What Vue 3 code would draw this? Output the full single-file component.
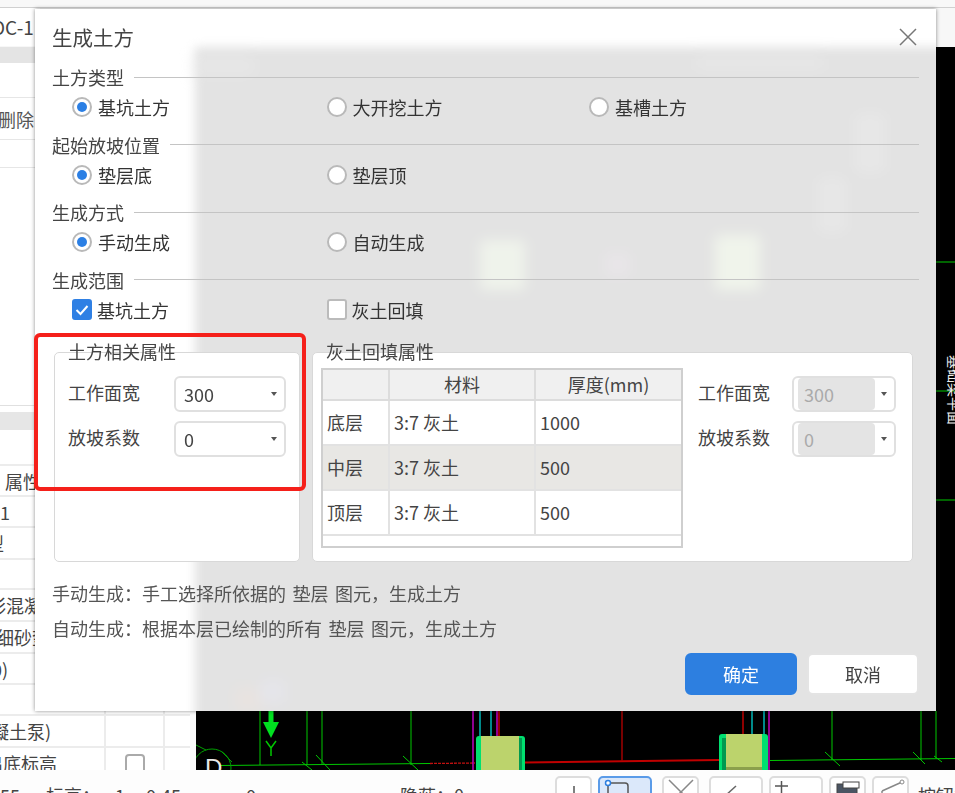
<script setup>
const sections = [
  { title: '土方类型', options: [{ t: '基坑土方', on: true }, { t: '大开挖土方' }, { t: '基槽土方' }] },
  { title: '起始放坡位置', options: [{ t: '垫层底', on: true }, { t: '垫层顶' }] },
  { title: '生成方式', options: [{ t: '手动生成', on: true }, { t: '自动生成' }] },
]
const rows = [
  { name: '底层', mat: '3:7 灰土', h: '1000' },
  { name: '中层', mat: '3:7 灰土', h: '500', alt: true },
  { name: '顶层', mat: '3:7 灰土', h: '500' },
]
const blobs = [
  { l: 285, t: 193, w: 45, h: 50, c: '#eff3eb' },
  { l: 520, t: 188, w: 45, h: 55, c: '#f0f4eb' },
  { l: 660, t: 66, w: 30, h: 60, c: '#e7e7e7' },
  { l: 623, t: 130, w: 28, h: 56, c: '#e7e7e7' },
  { l: 410, t: 205, w: 25, h: 25, c: '#e8e5e8' },
  { l: 40, t: 640, w: 30, h: 25, c: '#e8e3e0' },
  { l: 65, t: 632, w: 25, h: 25, c: '#e5e5ea' },
  { l: 0, t: 8, w: 60, h: 22, c: '#e6e6e6' },
  { l: 500, t: 8, w: 130, h: 16, c: '#e6e6e6' },
]
const leftRows = [
  { h: 36, a: '', x: 0 },
  { h: 31, a: '属性', x: 5 },
  { h: 31, a: '1', x: 0 },
  { h: 32, a: '型', x: -14 },
  { h: 30, a: '', x: 0 },
  { h: 32, a: '彩混凝', x: -12 },
  { h: 32, a: '细砂垫', x: -4 },
  { h: 31, a: '0)', x: -8 },
  { h: 31, a: '', x: 0 },
  { h: 32, a: '凝土泵)', x: -9 },
  { h: 32, a: '出底标高', x: -15, check: true },
]
const statusItems = [
  { t: '55', w: 46 }, { t: '标高：', w: 69 }, { t: '1', w: 31 }, { t: '0.45', w: 100 },
  { t: '0', w: 154 }, { t: '隐蔽：0', w: 155 },
]
</script>

<template>
  <div class="app">
    <div class="topline"></div>
    <div class="tabbar"><span class="tabtext">OC-1</span></div>
    <div class="main">
      <aside class="left">
        <div class="lhead"></div>
        <div class="lrow r35"></div>
        <div class="lrow r42"><span class="del">删除</span></div>
        <div class="lrow r28"></div>
        <div class="lgap"></div>
        <div class="lhead2"></div>
        <div class="lrow2" v-for="(r, i) in leftRows" :key="i" :style="{ height: r.h + 'px' }">
          <span class="c1"><span :style="{ marginLeft: r.x + 'px' }">{{ r.a }}</span></span>
          <span class="c2"><i v-if="r.check" class="lcheck"></i></span>
        </div>
      </aside>
      <div class="canvas">
        <svg class="cad" viewBox="196 47 759 723" width="759" height="723">
          <g stroke="#00c800" stroke-width="1" fill="none">
            <path d="M936 262H955M936 391H955M936 500H955" />
            <path d="M260 711V765M307 711V765M322 711V765M411 711V765" />
            <path d="M220 765.5L430 763.5" />
            <path d="M770 760.5L955 758.5M832 711V760M921 711V760M936 711V758" />
            <path d="M302 762L312 770M316 755L330 770M403 756L418 770M825 752L840 766M913 752L925 764M934 756L942 762" />
            <circle cx="212" cy="768" r="19" stroke="#00a000" />
            <path d="M196 745L206 750M222 752L232 762" stroke="#00a000" />
            <path d="M266 741L271 748L276 741M271 748V756" stroke-width="1.500" />
          </g>
          <path d="M268.500 711H273.500V722H279L271 738L263 722H268.500Z" fill="#00e020" />
          <text x="205" y="776" class="axis">D</text>
          <path d="M430 763.500L475 763" stroke="#c01010" stroke-width="1.300" stroke-dasharray="3 1" />
          <path d="M525 762.500L719 760" stroke="#c00000" stroke-width="2" />
          <path d="M622 711V761" stroke="#a00000" stroke-width="1.500" />
          <g fill="none" stroke-width="1.500">
            <path d="M480 711V736M491 711V736M752 711V734M764 711V734" stroke="#00b8b8" />
            <path d="M497 711V736M473 711V770M769 711V770" stroke="#c000c0" />
            <path d="M499 711V736M743 711V734" stroke="#c00000" />
            <path d="M478 745V770" stroke="#00b8b8" />
          </g>
          <g>
            <rect x="476" y="736" width="49" height="36" rx="3" fill="#00e070" />
            <rect x="481" y="736" width="38" height="36" fill="#bcd36c" />
            <rect x="519" y="738" width="3" height="34" fill="#009a50" />
            <rect x="719" y="734" width="49" height="38" rx="3" fill="#00e070" />
            <rect x="722" y="738" width="4" height="34" fill="#009a50" />
            <rect x="726" y="734" width="36" height="34" fill="#bcd36c" />
            <rect x="726" y="767" width="36" height="5" fill="#8ba04c" />
          </g>
          <text class="vtext" transform="translate(949 355) rotate(90)">基础梁平面</text>
        </svg>
      </div>
    </div>
    <div class="status">
      <span v-for="s in statusItems" :key="s.t" class="sitem" :style="{ width: s.w + 'px' }">{{ s.t }}</span>
      <div class="tools">
        <span class="tool w37"><svg width="35" height="20"><path d="M17 8V20M17 18H26" stroke="#555" stroke-width="1.500" fill="none" /></svg></span>
        <span class="tool w54 sel"><svg width="52" height="20"><rect x="8" y="5" width="20" height="20" rx="3" stroke="#555" stroke-width="1.500" fill="none" /><circle cx="8" cy="5" r="2.500" fill="#fff" stroke="#2d7fe0" stroke-width="1.500" /><path d="M40 15L43 18L46 15" fill="#777" /></svg></span>
        <span class="tool w37 m8"><svg width="35" height="20"><path d="M5 2L17 14L29 2M17 14L8 22M17 14L26 22" stroke="#888" stroke-width="1.500" fill="none" /></svg></span>
        <span class="tool w54 m8"><svg width="52" height="20"><path d="M14 18L25 8" stroke="#666" stroke-width="1.500" /><path d="M41 15L44 18L47 15" fill="#777" /></svg></span>
        <span class="tool w54"><svg width="52" height="20"><path d="M4 8H17M10.500 3V16" stroke="#555" stroke-width="1.500" /><path d="M40 15L43 18L46 15" fill="#777" /></svg></span>
        <span class="tool w37"><svg width="35" height="20"><rect x="6" y="6" width="20" height="18" fill="#4b5563" stroke="#444" /><rect x="12" y="4" width="16" height="6" fill="#fff" stroke="#444" /></svg></span>
        <span class="tool w37"><svg width="35" height="20"><path d="M8 13L28 4" stroke="#888" stroke-width="1.500" /><circle cx="28" cy="4" r="2" fill="#fff" stroke="#888" /><path d="M8 13V22" stroke="#888" stroke-width="1.500" /></svg></span>
        <span class="toolnote">按钮栏</span>
      </div>
    </div>

    <section class="dialog">
      <div class="backdrop">
        <i v-for="(b, i) in blobs" :key="i" class="blob" :style="{ left: b.l + 'px', top: b.t + 'px', width: b.w + 'px', height: b.h + 'px', background: b.c }"></i>
      </div>
      <div class="content">
        <header class="dhead">
          <h1>生成土方</h1>
          <svg class="close" width="18" height="18" viewBox="0 0 18 18"><path d="M1 1L17 17M17 1L1 17" stroke="#777" stroke-width="1.500" /></svg>
        </header>

        <div v-for="s in sections" :key="s.title" class="sec">
          <div class="legend"><span>{{ s.title }}</span><i></i></div>
          <div class="opts">
            <label v-for="o in s.options" :key="o.t" class="opt">
              <span class="radio" :class="{ on: o.on }"></span>{{ o.t }}
            </label>
          </div>
        </div>
        <div class="sec">
          <div class="legend"><span>生成范围</span><i></i></div>
          <div class="opts">
            <label class="opt tight">
              <span class="check on"><svg width="16" height="16" viewBox="0 0 16 16"><path d="M2.500 8L6.500 12L13.500 4" stroke="#fff" stroke-width="2" fill="none" /></svg></span>基坑土方
            </label>
            <label class="opt tight"><span class="check"></span>灰土回填</label>
          </div>
        </div>

        <div class="panels">
          <div class="panel pleft">
            <span class="ptitle">土方相关属性</span>
            <div class="form">
              <span class="flabel">工作面宽</span>
              <div class="select"><span class="val">300</span><i class="caret"></i></div>
              <span class="flabel">放坡系数</span>
              <div class="select"><span class="val">0</span><i class="caret"></i></div>
            </div>
          </div>
          <div class="panel pright">
            <span class="ptitle">灰土回填属性</span>
            <div class="tablewrap">
              <table>
                <thead>
                  <tr><th></th><th>材料</th><th>厚度(mm)</th></tr>
                </thead>
                <tbody>
                  <tr v-for="r in rows" :key="r.name" :class="{ alt: r.alt }">
                    <td>{{ r.name }}</td><td>{{ r.mat }}</td><td>{{ r.h }}</td>
                  </tr>
                </tbody>
              </table>
            </div>
            <div class="form side">
              <span class="flabel">工作面宽</span>
              <div class="select off"><span class="val">300</span><i class="caret"></i></div>
              <span class="flabel">放坡系数</span>
              <div class="select off"><span class="val">0</span><i class="caret"></i></div>
            </div>
          </div>
        </div>

        <p class="help first">手动生成：手工选择所依据的 垫层 图元，生成土方</p>
        <p class="help">自动生成：根据本层已绘制的所有 垫层 图元，生成土方</p>

        <footer class="btns">
          <button class="btn primary">确定</button>
          <button class="btn">取消</button>
        </footer>
      </div>
    </section>

    <div class="redbox"></div>
  </div>
</template>

<style>
html, body { margin: 0; background: #fff; overflow: hidden; }
</style>

<style scoped>
.app {
  position: relative;
  width: 955px;
  height: 793px;
  overflow: hidden;
  background: #fff;
  font-family: "Noto Sans CJK SC", "Noto Sans", sans-serif;
  font-size: 18px;
  color: #333;
  display: flex;
  flex-direction: column;
  filter: blur(0.45px);
}
.topline { height: 8px; background: #f8f8f8; border-bottom: 1px solid #d0d0d0; box-sizing: border-box; flex: none; }
.tabbar { height: 39px; flex: none; background: #f7f7f7; display: flex; align-items: center; overflow: hidden; }
.tabtext { margin-left: -9px; font-size: 19px; color: #444; background: #fff; padding-right: 6px; line-height: 38px; margin-top: -1px; }
.main { flex: none; height: 723px; display: flex; }
.left { width: 196px; flex: none; overflow: hidden; background: #fafafa; }
.lhead { height: 16px; background: #e4e4e4; }
.lrow { box-sizing: border-box; border-bottom: 1px solid #e6e6e6; background: #fff; overflow: hidden; }
.r35 { height: 35px; }
.r42 { height: 42px; display: flex; align-items: center; }
.r28 { height: 28px; }
.del { margin-left: -2px; color: #555; white-space: nowrap; }
.lgap { height: 238px; background: #fff; border-bottom: 1px solid #e0e0e0; box-sizing: border-box; }
.lhead2 { height: 24px; border-top: 6px solid #fff; background: #e6e6e6; box-sizing: border-box; }
.lrow2 {
  box-sizing: border-box;
  width: 190px;
  display: grid;
  grid-template-columns: 104px 61px 25px;
  border-bottom: 2px solid #ececec;
  background: #fff;
  overflow: hidden;
  align-items: center;
  color: #444;
  white-space: nowrap;
}
.c1 { grid-column: 1; overflow: hidden; height: 100%; display: flex; align-items: center; }
.c2 { grid-column: 2; height: 100%; border-left: 2px solid #ececec; border-right: 2px solid #ececec; display: flex; justify-content: center; padding-top: 6px; box-sizing: border-box; }
.lcheck { display: block; width: 20px; height: 22px; border: 2px solid #aaa; border-radius: 4px; box-sizing: border-box; background: #fff; }
.canvas { flex: 1; background: #000; overflow: hidden; }
.cad { display: block; }
.axis { font-size: 24px; fill: #e8e8e8; font-family: "Liberation Sans", sans-serif; }
.vtext { font-size: 14px; fill: #eee; }
.status { flex: none; height: 23px; background: #fdfdfd; display: flex; overflow: hidden; position: relative; }
.sitem { flex: none; font-size: 18px; color: #444; line-height: 20px; padding-top: 15px; box-sizing: content-box; white-space: nowrap; }
.tools { display: flex; gap: 6px; padding-top: 6px; margin-left: 0; flex: none; }
.tool { display: block; flex: none; height: 30px; border: 2px solid #ddd; border-radius: 5px; box-sizing: border-box; overflow: hidden; background: #fff; }
.tool svg { display: block; }
.w37 { width: 37px; }
.w54 { width: 54px; }
.m8 { margin-left: 4px; }
.sel { background: #dbe8fa; border-color: #5a9be8; }
.toolnote { font-size: 18px; color: #444; margin-left: 3px; line-height: 20px; padding-top: 9px; white-space: nowrap; }

.dialog {
  position: absolute;
  left: 35px;
  top: 9px;
  width: 901px;
  height: 702px;
  background: #fff;
  box-shadow: 0 0 4px rgba(0, 0, 0, 0.45);
  overflow: hidden;
}
.backdrop {
  position: absolute;
  left: 160px;
  top: 38px;
  right: -30px;
  bottom: -30px;
  background: #e3e3e3;
  filter: blur(5px);
}
.blob { position: absolute; display: block; filter: blur(5px); }
.content { position: relative; padding: 0 17px; }
.dhead { height: 56px; display: flex; align-items: center; justify-content: space-between; }
h1 { margin: 0; font-size: 20.500px; font-weight: 400; color: #444; }
.close { margin-right: 2px; margin-top: 0; }
.sec { height: 60px; margin-bottom: 7.670px; }
.legend { height: 24px; display: flex; align-items: center; gap: 10px; color: #444; }
.legend i { flex: 1; display: block; height: 1px; background: #c4c4c4; margin-top: 0; }
.opts { height: 36px; display: grid; grid-template-columns: 254.500px 262.500px 1fr; padding-left: 20px; align-items: center; }
.opt { display: flex; align-items: center; gap: 6px; color: #333; }
.opt.tight { gap: 5px; }
.radio { display: block; width: 20px; height: 20px; border: 2px solid #b9b9b9; border-radius: 50%; background: #fff; box-sizing: border-box; position: relative; }
.radio.on::after { content: ""; position: absolute; left: 3px; top: 3px; width: 10px; height: 10px; border-radius: 50%; background: #2b7fe4; }
.check { display: flex; align-items: center; justify-content: center; width: 20px; height: 21px; border: 2px solid #bbb; border-radius: 3px; background: #fff; box-sizing: border-box; }
.check.on { background: #2f80e4; border-color: #2f80e4; }
.panels { display: flex; gap: 12px; margin: 24px 6px 0 2px; }
.panel { position: relative; height: 210px; box-sizing: border-box; background: #fff; border: 1px solid #d8d8d8; border-radius: 5px; }
.pleft { width: 247px; padding: 23px 13px 0 13px; }
.pright { width: 601px; padding: 15px 17px 0 8px; display: flex; gap: 15px; }
.ptitle { position: absolute; top: -12px; left: 13px; color: #444; line-height: 20px; }
.form { display: grid; grid-template-columns: 106px 112px; row-gap: 9px; align-items: center; color: #444; }
.form.side { grid-template-columns: 94px 104px; align-self: flex-start; padding-top: 8px; }
.flabel { line-height: 36px; margin-top: -2px; margin-bottom: 2px; white-space: nowrap; }
.select { position: relative; height: 36px; box-sizing: border-box; border: 2px solid #e0e0e0; border-radius: 6px; background: #fff; display: flex; align-items: center; padding-left: 8px; color: #444; }
.val { line-height: 24px; }
.caret { position: absolute; right: 7px; top: 14px; width: 0; height: 0; border-left: 3.500px solid transparent; border-right: 3.500px solid transparent; border-top: 4px solid #555; }
.select.off { padding-left: 0; }
.select.off .val { position: absolute; left: 4px; top: 0; bottom: 0; width: 77px; box-sizing: border-box; padding-left: 6px; line-height: 32px; background: #e4e4e4; color: #aaa; border-radius: 4px; }
.tablewrap { width: 362px; height: 180px; box-sizing: border-box; border: 2px solid #cfcfcf; background: #fff; flex: none; }
table { border-collapse: collapse; table-layout: fixed; width: 358px; }
th:nth-child(1), td:nth-child(1) { width: 66px; }
th:nth-child(2), td:nth-child(2) { width: 146px; }
th, td { border: 2px solid #e2e2e2; box-sizing: border-box; font-weight: 400; color: #444; padding: 0; }
th { height: 30px; background: #f0f0f0; text-align: center; border-color: #dcdcdc; line-height: 20px; }
td { height: 45px; padding-left: 4px; line-height: 24px; }
tr.alt td { background: #e8e7e4; }
th:first-child, td:first-child { border-left: 0; }
th:last-child, td:last-child { border-right: 0; }
thead th { border-top: 0; }
.help { margin: 0; height: 35px; line-height: 35px; color: #555; white-space: nowrap; word-spacing: 2.500px; }
.help.first { margin-top: 14px; }
.btns { display: flex; justify-content: flex-end; gap: 10px; margin-top: 7px; }
.btn { width: 112px; height: 42px; border: 2px solid #e4e4e4; border-radius: 6px; background: #fff; font: inherit; color: #444; padding: 0; }
.btn.primary { background: #2d7fe0; border-color: #2d7fe0; color: #fff; }
.redbox { position: absolute; left: 34px; top: 333px; width: 272px; height: 158px; box-sizing: border-box; border: 4px solid #f5201a; border-radius: 6px; }
</style>
